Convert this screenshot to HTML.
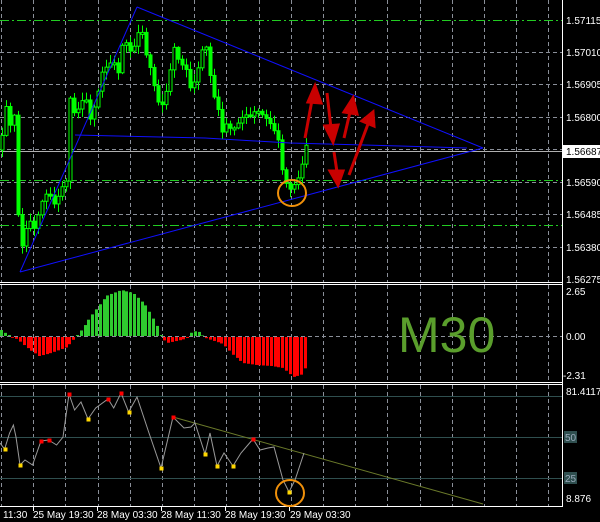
<!DOCTYPE html>
<html><head><meta charset="utf-8"><style>
html,body{margin:0;padding:0;background:#000;width:600px;height:522px;overflow:hidden}
svg{display:block}
text{font-family:"Liberation Sans",sans-serif;font-size:10px;fill:#fff}
</style></head><body>
<svg id="s" width="600" height="522" xmlns="http://www.w3.org/2000/svg">
<rect width="600" height="522" fill="#000"/>
<g id="grid" stroke="#8a8f99" stroke-width="1" stroke-dasharray="4,3"></g>
<g stroke="#22cc22" stroke-width="1" stroke-dasharray="9,3,2,3">
<line x1="0" y1="20.5" x2="562" y2="20.5"/>
<line x1="0" y1="180.5" x2="562" y2="180.5"/>
<line x1="0" y1="225.5" x2="562" y2="225.5"/>
</g>
<line x1="0" y1="151.5" x2="562" y2="151.5" stroke="#b0b0b0"/>
<g id="candles"></g>
<g stroke="#1010ff" stroke-width="1" fill="none">
<line x1="20" y1="272" x2="137" y2="7"/>
<line x1="137" y1="7" x2="483" y2="148"/>
<line x1="20" y1="272" x2="483" y2="148"/>
<polyline points="75,135 205,138 290,143 400,146 467,148"/>
</g>
<ellipse cx="292" cy="193" rx="14" ry="13" stroke="#f0900a" stroke-width="2" fill="none"/>
<g stroke="#c80000" stroke-width="3" fill="#c80000">
<line x1="305" y1="138" x2="312" y2="100"/><polygon points="308,102 321,103 315,86"/>
<line x1="327" y1="93" x2="331" y2="128"/><polygon points="325,126 338,125 333,142"/>
<line x1="344" y1="138" x2="350" y2="112"/><polygon points="344,112 357,114 353,98"/>
<line x1="334" y1="152" x2="337" y2="172"/><polygon points="330,171 343,171 338,185"/>
<line x1="349" y1="175" x2="368" y2="124"/><polygon points="362,121 374,126 373,112"/>
</g>
<line x1="562.5" y1="0" x2="562.5" y2="507" stroke="#fff"/>
<line x1="0" y1="282.5" x2="562" y2="282.5" stroke="#fff"/>
<line x1="0" y1="284.5" x2="562" y2="284.5" stroke="#fff"/>
<line x1="0" y1="382.5" x2="562" y2="382.5" stroke="#fff"/>
<line x1="0" y1="384.5" x2="562" y2="384.5" stroke="#fff"/>
<line x1="0" y1="506.5" x2="562" y2="506.5" stroke="#fff"/>
<line x1="0" y1="336.5" x2="562" y2="336.5" stroke="#8a8f99" stroke-dasharray="4,3"/>
<g id="hist"></g>
<text x="398" y="352" style="font-size:50px;fill:#5a9e2c">M30</text>
<text x="566" y="24">1.57115</text>
<text x="566" y="56">1.57010</text>
<text x="566" y="88">1.56905</text>
<text x="566" y="121">1.56800</text>
<rect x="563" y="145" width="37" height="13" fill="#fff"/>
<text x="566" y="155" style="fill:#000">1.56687</text>
<text x="566" y="186">1.56590</text>
<text x="566" y="218">1.56485</text>
<text x="566" y="251">1.56380</text>
<text x="566" y="283">1.56275</text>
<text x="566" y="295">2.65</text>
<text x="566" y="340">0.00</text>
<text x="563" y="379">-2.31</text>
<g stroke="#2f4f4f" stroke-width="1">
<line x1="0" y1="396.5" x2="562" y2="396.5"/>
<line x1="0" y1="437.5" x2="562" y2="437.5"/>
<line x1="0" y1="478.5" x2="562" y2="478.5"/>
</g>
<rect x="564" y="431" width="13" height="12" fill="#2f4f4f"/>
<rect x="564" y="472" width="13" height="12" fill="#2f4f4f"/>
<text x="565" y="441" style="fill:#9ab">50</text>
<text x="565" y="482" style="fill:#9ab">25</text>
<text x="566" y="395">81.4117</text>
<text x="566" y="502">8.876</text>
<line x1="173" y1="417" x2="483" y2="504" stroke="#6b7a2a"/>
<polyline fill="none" stroke="#9a9a9a" points="0,443 4.6,449 9.6,433 13.4,425 16,437 20,465 25,460 32.5,465 41,441 48.6,440 56.6,445 63,437 69,394 74.6,410 81,402 88,419 95.7,408 108,399 113.7,408 121,393 128.6,412 137,397 149,433 161,468 173,417 184,428 191,427 195,423 205,454 210,433 217,466 224,453 233,466 241,453 253,439 260,450 268,448 274,447 283,480 289,492 295,480 304,453"/>
<g id="dots"></g>
<ellipse cx="290" cy="493" rx="14" ry="13" stroke="#f0900a" stroke-width="2" fill="none"/>
<g stroke="#fff"><line x1="33.5" y1="507" x2="33.5" y2="511"/><line x1="97.5" y1="507" x2="97.5" y2="511"/><line x1="161.5" y1="507" x2="161.5" y2="511"/><line x1="225.5" y1="507" x2="225.5" y2="511"/><line x1="289.5" y1="507" x2="289.5" y2="511"/></g>
<text x="3" y="518">11:30</text>
<text x="33" y="518">25 May 19:30</text>
<text x="97" y="518">28 May 03:30</text>
<text x="161" y="518">28 May 11:30</text>
<text x="225" y="518">28 May 19:30</text>
<text x="290" y="518">29 May 03:30</text>
</svg>
<script>
var NS="http://www.w3.org/2000/svg";
function el(p,t,a){var e=document.createElementNS(NS,t);for(var k in a)e.setAttribute(k,a[k]);p.appendChild(e);return e;}
var g=document.getElementById('grid');
for(var x=1;x<562;x+=32.2){var xx=Math.round(x)+0.5;el(g,'line',{x1:xx,y1:0,x2:xx,y2:282});el(g,'line',{x1:xx,y1:285,x2:xx,y2:382});el(g,'line',{x1:xx,y1:385,x2:xx,y2:506});}
[52,84,117,149,182,214,247].forEach(function(y){el(g,'line',{x1:0,y1:y+.5,x2:562,y2:y+.5});});
var kp=[[0,150],[6,110],[10,130],[14,120],[17,200],[20,255],[24,240],[28,215],[35,225],[40,200],[48,190],[55,210],[60,195],[66,185],[70,100],[75,115],[80,100],[85,90],[90,115],[96,100],[102,75],[108,70],[113,65],[118,75],[122,45],[126,40],[132,50],[137,28],[142,30],[146,55],[150,70],[155,95],[160,115],[165,100],[170,70],[174,45],[178,55],[182,60],[186,65],[190,85],[196,80],[200,60],[205,45],[210,80],[214,100],[218,110],[222,130],[226,120],[232,125],[238,120],[244,115],[250,120],[256,115],[262,118],[268,120],[273,125],[278,135],[282,165],[286,180],[290,188],[296,185],[300,178],[304,160],[306,150]];
function f(x){for(var i=1;i<kp.length;i++){if(x<=kp[i][0]){var a=kp[i-1],b=kp[i];return a[1]+(b[1]-a[1])*(x-a[0])/(b[0]-a[0]);}}return 150;}
var c=document.getElementById('candles');var prev=150;
for(var x=2;x<=306;x+=4){var cl=f(x)+Math.sin(x*1.7)*5;var o=prev;var hi=Math.min(o,cl)-1-Math.abs(Math.sin(x*.9))*7;var lo=Math.max(o,cl)+1+Math.abs(Math.cos(x*1.3))*7;
el(c,'line',{x1:x+.5,y1:hi,x2:x+.5,y2:lo,stroke:'#00ff00'});
var t=Math.min(o,cl),h=Math.max(2,Math.abs(o-cl));
el(c,'rect',{x:x-1,y:t,width:3,height:h,fill:(cl<o?'#000':'#00ff00'),stroke:'#00ff00','stroke-width':1});prev=cl;}
var hg=document.getElementById('hist');
var hk=[[0,6],[8,0],[16,-2],[25,-10],[38,-19],[50,-16],[66,-10],[72,-3],[78,3],[90,20],[105,40],[120,46],[132,43],[145,30],[155,12],[160,0],[166,-6],[175,-4],[184,-2],[192,5],[198,4],[202,0],[210,-3],[222,-7],[232,-18],[242,-26],[255,-28],[270,-29],[282,-31],[292,-40],[300,-38],[306,-28]];
function hf(x){for(var i=1;i<hk.length;i++){if(x<=hk[i][0]){var a=hk[i-1],b=hk[i];return a[1]+(b[1]-a[1])*(x-a[0])/(b[0]-a[0]);}}return 0;}
for(var x=0;x<=306;x+=3.8){var v=hf(x);if(Math.abs(v)<.5)v=v<0?-1:1;var xx=Math.round(x);
el(hg,'rect',{x:xx,y:v>0?336-v:337,width:3,height:Math.abs(v),fill:v>0?'#2fcb2f':'#ff0000'});}
var d=document.getElementById('dots');
[[41,441],[49,440],[69,394],[108,399],[121,393],[173,417],[253,439]].forEach(function(p){el(d,'rect',{x:p[0]-1.5,y:p[1]-1.5,width:4,height:4,fill:'#ff0000'});});
[[5,449],[20,465],[88,419],[129,412],[161,468],[205,454],[217,466],[233,466],[289,492]].forEach(function(p){el(d,'rect',{x:p[0]-1.5,y:p[1]-1.5,width:4,height:4,fill:'#ffd700'});});
</script>
</body></html>
